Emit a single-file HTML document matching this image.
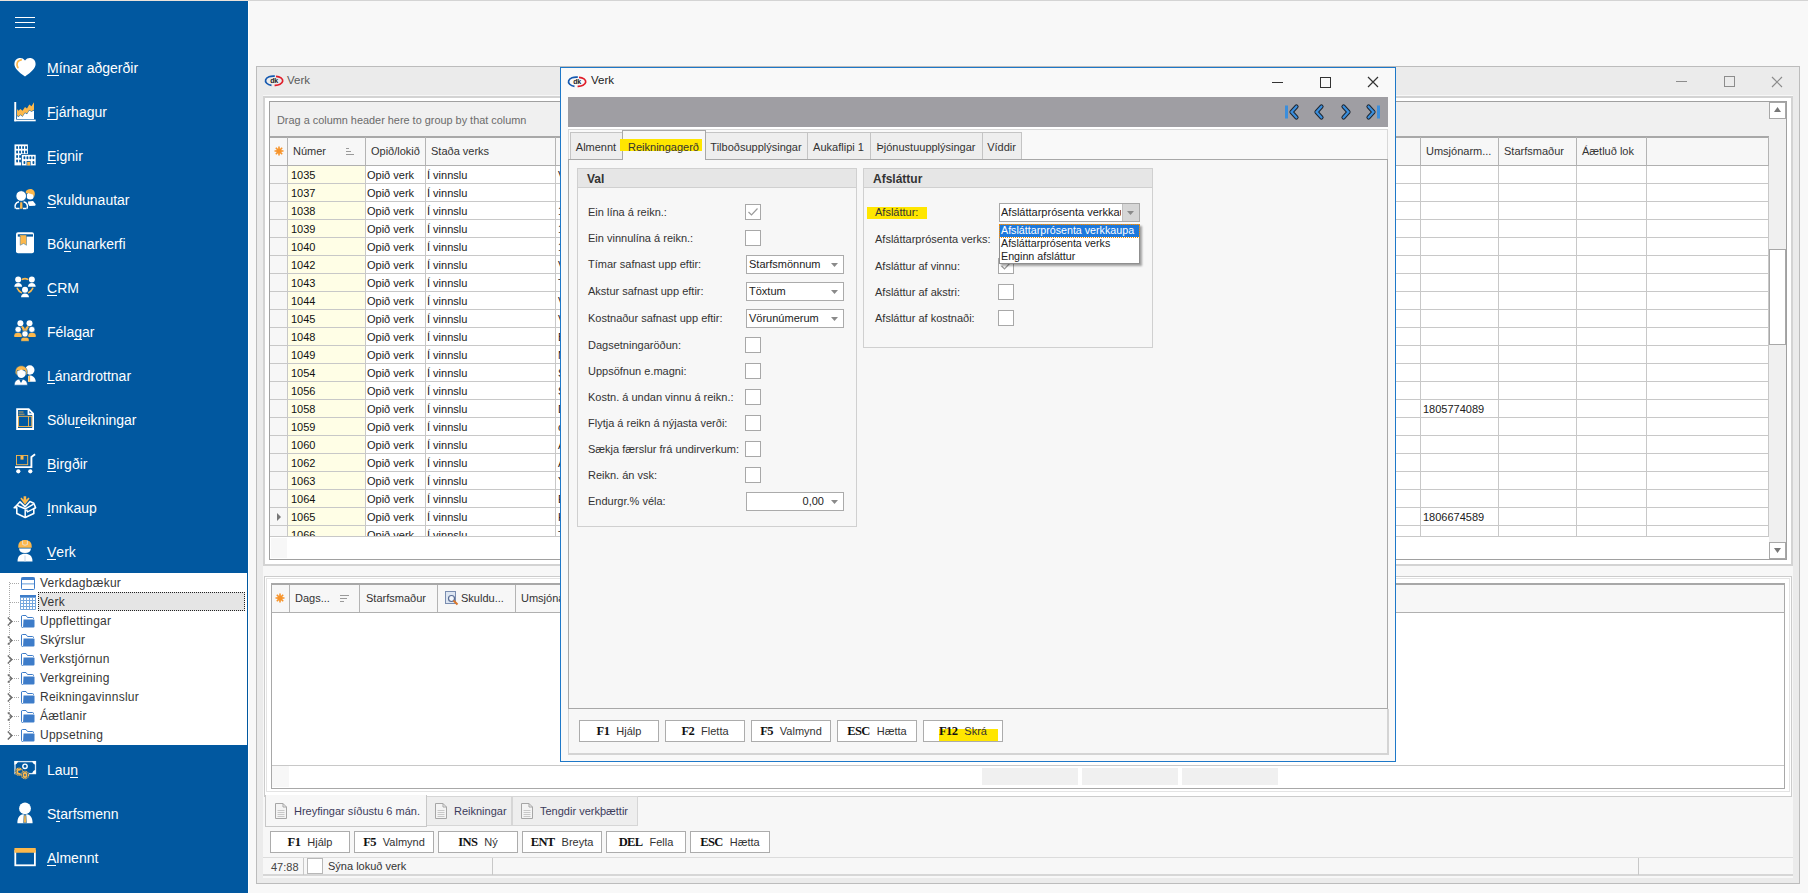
<!DOCTYPE html><html><head><meta charset="utf-8"><style>
*{box-sizing:border-box;margin:0;padding:0}
html,body{width:1808px;height:893px;overflow:hidden;background:#F8F8F8;font-family:"Liberation Sans",sans-serif;font-size:11px;color:#202020}
.a{position:absolute}
.t{position:absolute;white-space:nowrap;line-height:13px;height:13px}
.nav{position:absolute;left:47px;color:#fff;font-size:14px;white-space:nowrap;line-height:16px}
.nav u{text-decoration:none;position:relative}.nav u::after{content:'';position:absolute;left:0;right:0;top:15px;height:1px;background:#fff}
.tree{position:absolute;left:40px;font-size:12px;color:#363636;white-space:nowrap;line-height:14px;letter-spacing:0.25px}
.btn{position:absolute;height:22px;width:80px;border:1px solid #ACACAC;background:#fff;font-size:11px;line-height:20px;text-align:center;white-space:nowrap;color:#333}
.btn b{font-family:"Liberation Serif",serif;font-weight:bold;color:#111;margin-right:7px;font-size:12.5px;letter-spacing:-0.6px}
svg{position:absolute;overflow:visible}
</style></head><body>
<div class="a" style="left:0px;top:0px;width:248px;height:1px;background:#EBE2DA"></div>
<div class="a" style="left:248px;top:0px;width:1560px;height:1px;background:#D4D4D4"></div>
<div class="a" style="left:248px;top:1px;width:1px;height:892px;background:#fff"></div>
<div class="a" style="left:0px;top:1px;width:248px;height:892px;background:#0158A0"></div>
<div class="a" style="left:15px;top:17px;width:20px;height:1px;background:#fff"></div>
<div class="a" style="left:15px;top:22px;width:20px;height:1px;background:#fff"></div>
<div class="a" style="left:15px;top:27px;width:20px;height:1px;background:#fff"></div>
<div class="nav" style="top:60px"><u>M</u>ínar aðgerðir</div>
<div class="nav" style="top:104px"><u>F</u>járhagur</div>
<div class="nav" style="top:148px"><u>E</u>ignir</div>
<div class="nav" style="top:192px"><u>S</u>kuldunautar</div>
<div class="nav" style="top:236px">Bó<u>k</u>unarkerfi</div>
<div class="nav" style="top:280px"><u>C</u>RM</div>
<div class="nav" style="top:324px">Féla<u>g</u>ar</div>
<div class="nav" style="top:368px"><u>L</u>ánardrottnar</div>
<div class="nav" style="top:412px">Sölu<u>r</u>eikningar</div>
<div class="nav" style="top:456px"><u>B</u>irgðir</div>
<div class="nav" style="top:500px"><u>I</u>nnkaup</div>
<div class="nav" style="top:544px"><u>V</u>erk</div>
<div class="nav" style="top:762px">Lau<u>n</u></div>
<div class="nav" style="top:806px">S<u>t</u>arfsmenn</div>
<div class="nav" style="top:850px"><u>A</u>lmennt</div>
<svg style="left:10px;top:52px" width="32" height="28" viewBox="0 0 32 28"><path d="M15 8.6C13.6 6.4 11.3 5.8 9.2 6.1C6.2 6.6 4.4 9.2 4.4 12C4.4 16.2 8.2 19.8 15 24.6C21.8 19.8 25.6 16.2 25.6 12C25.6 9.2 23.8 6.6 20.8 6.1C18.7 5.8 16.4 6.4 15 8.6Z" fill="#fff"/><path d="M11.2 7.9C8.6 8.3 7 10.4 7 12.6C7 13.7 7.3 14.7 7.9 15.5" fill="none" stroke="#FCB84C" stroke-width="1.7" stroke-linecap="round"/></svg>
<svg style="left:10px;top:98px" width="32" height="28" viewBox="0 0 32 28"><rect x="4.3" y="4" width="1.9" height="19.3" fill="#fff"/><rect x="4.3" y="21.6" width="21.4" height="1.7" fill="#fff"/><path d="M7 18L8.5 19L10.5 17L12.5 18.8L15 15L17 16.2L19.2 12.6L21.5 13.8L24 12.5V21H7Z" fill="#fff"/><path d="M7 11L8.3 12.8L10.5 11L12.5 12.8L15 9L17 10.4L19.3 6.4L21.5 8.2L23.8 4.6L24 4.6V11.8L21.5 13.2L19.2 12L17 15.6L15 14.4L12.5 18.2L10.5 16.4L8.5 18.4L7 17.3Z" fill="#FCB84C"/></svg>
<svg style="left:10px;top:140px" width="32" height="28" viewBox="0 0 32 28"><rect x="4.5" y="4.4" width="13.4" height="21" fill="#fff"/><rect x="6.2" y="6" width="1.8" height="3" rx="0.8" fill="#0158A0"/><rect x="6.2" y="10.5" width="1.8" height="3" rx="0.8" fill="#0158A0"/><rect x="6.2" y="15" width="1.8" height="3" rx="0.8" fill="#0158A0"/><rect x="6.2" y="19.5" width="1.8" height="3" rx="0.8" fill="#0158A0"/><rect x="9.2" y="6" width="1.8" height="3" rx="0.8" fill="#0158A0"/><rect x="9.2" y="10.5" width="1.8" height="3" rx="0.8" fill="#0158A0"/><rect x="9.2" y="15" width="1.8" height="3" rx="0.8" fill="#0158A0"/><rect x="9.2" y="19.5" width="1.8" height="3" rx="0.8" fill="#0158A0"/><rect x="12.2" y="6" width="1.8" height="3" rx="0.8" fill="#0158A0"/><rect x="12.2" y="10.5" width="1.8" height="3" rx="0.8" fill="#0158A0"/><rect x="12.2" y="15" width="1.8" height="3" rx="0.8" fill="#0158A0"/><rect x="12.2" y="19.5" width="1.8" height="3" rx="0.8" fill="#0158A0"/><rect x="15.2" y="6" width="1.8" height="3" rx="0.8" fill="#0158A0"/><rect x="15.2" y="10.5" width="1.8" height="3" rx="0.8" fill="#0158A0"/><rect x="15.2" y="15" width="1.8" height="3" rx="0.8" fill="#0158A0"/><rect x="15.2" y="19.5" width="1.8" height="3" rx="0.8" fill="#0158A0"/><rect x="11.2" y="14" width="15.2" height="12" fill="#0158A0"/><rect x="12" y="14.8" width="13.7" height="10.6" fill="#fff"/><rect x="13.5" y="16.3" width="1.8" height="3" rx="0.8" fill="#0158A0"/><rect x="16.5" y="16.3" width="1.8" height="3" rx="0.8" fill="#0158A0"/><rect x="19.5" y="16.3" width="1.8" height="3" rx="0.8" fill="#0158A0"/><rect x="22.5" y="16.3" width="1.8" height="3" rx="0.8" fill="#0158A0"/><rect x="13.5" y="21" width="1.8" height="3" rx="0.8" fill="#0158A0"/><rect x="22.5" y="21" width="1.8" height="3" rx="0.8" fill="#0158A0"/><rect x="16.6" y="21" width="4" height="4.4" fill="#0158A0"/><rect x="17.2" y="21.8" width="2.8" height="3.6" fill="#FCB84C"/></svg>
<svg style="left:10px;top:184px" width="32" height="28" viewBox="0 0 32 28"><path d="M5.5 24.6C4.2 21.5 5.5 18.6 9 17.8M13.5 17.8C17 18.6 18.3 21.5 17 24.6" fill="none" stroke="#fff" stroke-width="1.5"/><path d="M6 24.5H9.5M13 24.5H16.5" stroke="#fff" stroke-width="1.5"/><path d="M10.2 18.2H12.3L12.6 24.8H10Z" fill="#FCB84C"/><path d="M18 17.5L23 17L25.7 20.3L25.2 21.8L19.4 22L18.2 20Z" fill="#fff"/><circle cx="20.2" cy="12" r="3.6" fill="#fff"/><path d="M15.6 8C16.5 5.8 18.3 5 20.3 5C23.5 5 25.2 7.5 24.8 10.5L24 13.2L23 10.6C21.5 10.3 19.2 9.6 18.2 9.1L16.5 9.7Z" fill="#FCB84C"/><circle cx="11.2" cy="12" r="5.3" fill="#fff" stroke="#0158A0" stroke-width="0.8"/></svg>
<svg style="left:10px;top:228px" width="32" height="28" viewBox="0 0 32 28"><rect x="6" y="4.2" width="18" height="21" rx="2" fill="#fff"/><path d="M7.8 6.3H23V8.6H7.8Z" fill="#0158A0"/><path d="M9.2 7H16.5V17.3L13.6 15.5L10.2 17.3V8.3Z" fill="#FCB84C" stroke="#0158A0" stroke-width="0.4"/></svg>
<svg style="left:10px;top:272px" width="32" height="28" viewBox="0 0 32 28"><circle cx="8.2" cy="7.4" r="3" fill="#fff"/><path d="M4.3 14.8C4.3 12.2 6 10.9 8.2 10.9C10.4 10.9 12.1 12.2 12.1 14.8Z" fill="#fff"/><circle cx="21.8" cy="7.4" r="3" fill="#fff"/><path d="M17.9 14.8C17.9 12.2 19.6 10.9 21.8 10.9C24 10.9 25.7 12.2 25.7 14.8Z" fill="#fff"/><circle cx="15" cy="17.8" r="3" fill="#fff"/><path d="M11 25.2C11 22.7 12.7 21.4 15 21.4C17.3 21.4 19 22.7 19 25.2Z" fill="#fff"/><path d="M12.4 7.3C14.2 6.3 15.8 6.3 17.6 7.3M7.3 16.3C8.3 18.4 9.7 19.8 11.4 20.6M22.7 16.3C21.7 18.4 20.3 19.8 18.6 20.6" fill="none" stroke="#FCB84C" stroke-width="1.6" stroke-linecap="round"/></svg>
<svg style="left:10px;top:316px" width="32" height="28" viewBox="0 0 32 28"><circle cx="10.4" cy="7.3" r="3" fill="#fff"/><circle cx="19.5" cy="7.3" r="3" fill="#fff"/><path d="M11.4 10.8C13.2 11 14 12.3 13.9 14.8L12.6 14.4C12.4 12.8 11.9 11.8 11.2 11.3ZM18.6 10.8C16.8 11 16 12.3 16.1 14.8L17.4 14.4C17.6 12.8 18.1 11.8 18.8 11.3Z" fill="#FCB84C"/><path d="M11.6 10.5Q14.4 11.2 14.2 15" fill="none" stroke="#FCB84C" stroke-width="1.6"/><path d="M18.4 10.5Q15.6 11.2 15.8 15" fill="none" stroke="#FCB84C" stroke-width="1.6"/><circle cx="8.1" cy="13.4" r="3" fill="#fff" stroke="#0158A0" stroke-width="0.5"/><circle cx="21.8" cy="13.4" r="3" fill="#fff" stroke="#0158A0" stroke-width="0.5"/><path d="M4.3 20.9V19.2Q4.3 16.9 6.6 16.9H9.4Q11.7 16.9 11.7 19.2V20.9Z" fill="#FCB84C"/><path d="M18.3 20.9V19.2Q18.3 16.9 20.6 16.9H23.4Q25.7 16.9 25.7 19.2V20.9Z" fill="#FCB84C"/><circle cx="15" cy="17.9" r="3.1" fill="#fff" stroke="#0158A0" stroke-width="0.6"/><path d="M11 25.3V23.6Q11 21.4 13.3 21.4H16.7Q19 21.4 19 23.6V25.3Z" fill="#FCB84C" stroke="#0158A0" stroke-width="0.4"/></svg>
<svg style="left:10px;top:360px" width="32" height="28" viewBox="0 0 32 28"><circle cx="19.8" cy="10" r="4.7" fill="#fff"/><path d="M18 16C20 14.8 24.5 15.3 25.7 20.8V21.8H18Z" fill="#fff"/><path d="M18.4 15.8H20.1V21.8H18.4Z" fill="#FCB84C"/><path d="M4.3 25.2C4.3 21.5 6.5 19 10.5 19C15 19 17.5 21.5 17.5 25.2Z" fill="#fff" stroke="#0158A0" stroke-width="0.6"/><path d="M9 19.3L11 23L13 19.3" fill="#0158A0"/><path d="M5.2 12.6C5.2 8.5 7.8 5.8 11.2 5.8C14.8 5.8 17.4 8.4 17.4 12.3C17.4 13.8 16.8 15 16 15.6V11.8L14 10L10.3 11L7 10.7V15.3C6.2 14.8 5.2 13.8 5.2 12.6Z" fill="#FCB84C" stroke="#0158A0" stroke-width="0.5"/><path d="M7.2 11.2L10 10.3L11 9.5L14 10.8L15.7 12V14.5C15 16.8 13.3 18 11.3 18C9.2 18 7.5 16.5 7.2 14.3Z" fill="#fff"/></svg>
<svg style="left:10px;top:404px" width="32" height="28" viewBox="0 0 32 28"><path d="M7.1 5.1H18.7L23.1 9.5V25H7.1Z" fill="none" stroke="#fff" stroke-width="1.8"/><path d="M18.5 5V10.2H23" fill="none" stroke="#fff" stroke-width="1.8"/><rect x="8.5" y="12.3" width="13.3" height="10.2" fill="none" stroke="#FCB84C" stroke-width="0.9"/><path d="M18.5 12.3V22.5" stroke="#FCB84C" stroke-width="0.9"/><path d="M8.5 8H13.5M8.5 10.2H14.5" stroke="#FCB84C" stroke-width="0.8"/></svg>
<svg style="left:10px;top:448px" width="32" height="28" viewBox="0 0 32 28"><path d="M25.1 6.3L21.4 9V19.1H5" fill="none" stroke="#fff" stroke-width="1.9"/><circle cx="8.3" cy="23.3" r="2.1" fill="#fff"/><circle cx="20.3" cy="23.3" r="2.1" fill="#fff"/><rect x="6.5" y="7.5" width="11.2" height="9.2" fill="none" stroke="#FCB84C" stroke-width="0.9"/><rect x="10.5" y="8" width="3" height="3.6" fill="#FCB84C"/></svg>
<svg style="left:10px;top:492px" width="32" height="28" viewBox="0 0 32 28"><path d="M6.6 13.5L4.2 15.8L6.8 15.5V21.5L15.2 25.5L23.8 21.5V16.7L25.6 15.7L23.8 11.2L20 9.5L15.2 14.8L10 9.8Z" fill="none" stroke="#fff" stroke-width="1.6" stroke-linejoin="round"/><path d="M6.8 13.2L15.2 16.8L23.6 12.2M15.2 16.8V25.3M16.5 17.6L17.5 19.8L24.8 16.2" fill="none" stroke="#fff" stroke-width="1.5"/><path d="M13.6 4.2H16.2V7.8L18.5 5.5L19.6 6.4L15 12.8L10.4 6.4L11.4 5.5L13.6 7.8Z" fill="#FCB84C"/></svg>
<svg style="left:10px;top:536px" width="32" height="28" viewBox="0 0 32 28"><path d="M8.3 10.2C8.3 6.2 11 4 15 4C19 4 21.7 6.2 21.7 10.2V11.8H8.3Z" fill="#FCB84C"/><path d="M12.6 4.5V8.5Q15 10 17.4 8.5V4.5" fill="none" stroke="#E8E8E8" stroke-width="0.8"/><path d="M9 12.5H21Q20.5 17 15 17Q9.5 17 9 12.5Z" fill="#fff"/><path d="M7.5 25.5C7.5 20 10.5 17.8 15 17.8C19.5 17.8 22.5 20 22.5 25.5Z" fill="#fff"/><path d="M15 19.5V25.5" stroke="#C9D8E8" stroke-width="1"/></svg>
<svg style="left:10px;top:754px" width="32" height="28" viewBox="0 0 32 28"><rect x="5" y="7.6" width="20.5" height="12" fill="none" stroke="#DCE8F3" stroke-width="1.3"/><path d="M4.4 7H8.2Q7.2 10.5 4.4 10.8ZM25.7 7H22Q23 10.5 25.7 10.8ZM25.7 19.7H22Q23 16.3 25.7 16ZM4.4 14V19.7" fill="#fff"/><circle cx="15" cy="12.3" r="2.2" fill="none" stroke="#fff" stroke-width="1.4"/><circle cx="9" cy="17.7" r="4.2" fill="#0158A0"/><circle cx="9" cy="17.7" r="3.6" fill="none" stroke="#FCB84C" stroke-width="1.2" stroke-dasharray="1.1 0.5"/><path d="M10.6 16Q9 14.8 7.6 16.2Q6.8 17.7 7.6 19.2Q9 20.5 10.6 19.4" fill="none" stroke="#FCB84C" stroke-width="1.8"/><circle cx="15" cy="21" r="4.2" fill="#0158A0"/><circle cx="15" cy="21" r="3.6" fill="none" stroke="#FCB84C" stroke-width="1.2" stroke-dasharray="1.1 0.5"/><ellipse cx="15" cy="21" rx="1.5" ry="2.1" fill="none" stroke="#FCB84C" stroke-width="1.7"/></svg>
<svg style="left:10px;top:798px" width="32" height="28" viewBox="0 0 32 28"><circle cx="15" cy="10.4" r="5.9" fill="#fff"/><path d="M7.4 25.2C7.3 19.8 9.8 16.4 13.2 16.2L15 17L16.8 16.2C20.2 16.4 22.7 19.8 22.6 25.2Z" fill="#fff"/><path d="M14 17.2H16L16.5 24.8H13.5Z" fill="#FCB84C" stroke="#0158A0" stroke-width="0.5"/></svg>
<svg style="left:10px;top:842px" width="32" height="28" viewBox="0 0 32 28"><rect x="5.3" y="9" width="19.6" height="14.3" fill="none" stroke="#fff" stroke-width="1.8"/><rect x="4.4" y="6" width="21.4" height="4.8" rx="0.6" fill="#FCB84C"/></svg>
<div class="a" style="left:0px;top:573px;width:247px;height:172px;background:#fff"></div>
<div class="tree" style="top:576px">Verkdagbækur</div>
<div class="a" style="left:10px;top:583px;width:9px;height:1px;border-top:1px dotted #A8A8A8"></div>
<svg style="left:21px;top:577px" width="14" height="13"><rect x="0.5" y="0.5" width="13" height="12" rx="1" fill="#fff" stroke="#3D7CC9"/><rect x="0.5" y="0.5" width="13" height="2.5" fill="#3D7CC9"/><rect x="1" y="6" width="12" height="1.6" fill="#9DC0E6"/></svg>
<div class="a" style="left:38px;top:592px;width:207px;height:19px;background:#E5E5E5;border:1px dotted #222"></div>
<div class="tree" style="top:595px">Verk</div>
<div class="a" style="left:10px;top:602px;width:9px;height:1px;border-top:1px dotted #A8A8A8"></div>
<svg style="left:20px;top:595px" width="16" height="15"><rect x="0" y="0" width="16" height="15" rx="1" fill="#76A7DE"/><rect x="0" y="0" width="16" height="2" fill="#3D7CC9"/><rect x="1" y="3" width="2" height="2" fill="#fff"/><rect x="1" y="6" width="2" height="2" fill="#fff"/><rect x="1" y="9" width="2" height="2" fill="#fff"/><rect x="1" y="12" width="2" height="2" fill="#fff"/><rect x="4" y="3" width="2" height="2" fill="#fff"/><rect x="4" y="6" width="2" height="2" fill="#fff"/><rect x="4" y="9" width="2" height="2" fill="#fff"/><rect x="4" y="12" width="2" height="2" fill="#fff"/><rect x="7" y="3" width="2" height="2" fill="#fff"/><rect x="7" y="6" width="2" height="2" fill="#fff"/><rect x="7" y="9" width="2" height="2" fill="#fff"/><rect x="7" y="12" width="2" height="2" fill="#fff"/><rect x="10" y="3" width="2" height="2" fill="#fff"/><rect x="10" y="6" width="2" height="2" fill="#fff"/><rect x="10" y="9" width="2" height="2" fill="#fff"/><rect x="10" y="12" width="2" height="2" fill="#fff"/><rect x="13" y="3" width="2" height="2" fill="#fff"/><rect x="13" y="6" width="2" height="2" fill="#fff"/><rect x="13" y="9" width="2" height="2" fill="#fff"/><rect x="13" y="12" width="2" height="2" fill="#fff"/></svg>
<div class="tree" style="top:614px">Uppflettingar</div>
<div class="a" style="left:10px;top:621px;width:9px;height:1px;border-top:1px dotted #A8A8A8"></div>
<svg style="left:21px;top:615px" width="14" height="13"><path d="M0.5 1.5Q0.5 0.5 1.5 0.5H5L6.5 2.5H11.5Q12.5 2.5 12.5 3.5V4" fill="none" stroke="#3D7CC9"/><path d="M0.5 1V11.5Q0.5 12.5 1.5 12.5H2" fill="none" stroke="#3D7CC9"/><path d="M2.5 4.5H13Q13.5 4.5 13.5 5.5V11.5Q13.5 12.5 12.5 12.5H2Z" fill="#3D7CC9"/></svg>
<svg style="left:7px;top:617px" width="6" height="9"><path d="M0.8 0.6L4.8 4.5L0.8 8.4" fill="none" stroke="#6A6A6A" stroke-width="1.4"/></svg>
<div class="tree" style="top:633px">Skýrslur</div>
<div class="a" style="left:10px;top:640px;width:9px;height:1px;border-top:1px dotted #A8A8A8"></div>
<svg style="left:21px;top:634px" width="14" height="13"><path d="M0.5 1.5Q0.5 0.5 1.5 0.5H5L6.5 2.5H11.5Q12.5 2.5 12.5 3.5V4" fill="none" stroke="#3D7CC9"/><path d="M0.5 1V11.5Q0.5 12.5 1.5 12.5H2" fill="none" stroke="#3D7CC9"/><path d="M2.5 4.5H13Q13.5 4.5 13.5 5.5V11.5Q13.5 12.5 12.5 12.5H2Z" fill="#3D7CC9"/></svg>
<svg style="left:7px;top:636px" width="6" height="9"><path d="M0.8 0.6L4.8 4.5L0.8 8.4" fill="none" stroke="#6A6A6A" stroke-width="1.4"/></svg>
<div class="tree" style="top:652px">Verkstjórnun</div>
<div class="a" style="left:10px;top:659px;width:9px;height:1px;border-top:1px dotted #A8A8A8"></div>
<svg style="left:21px;top:653px" width="14" height="13"><path d="M0.5 1.5Q0.5 0.5 1.5 0.5H5L6.5 2.5H11.5Q12.5 2.5 12.5 3.5V4" fill="none" stroke="#3D7CC9"/><path d="M0.5 1V11.5Q0.5 12.5 1.5 12.5H2" fill="none" stroke="#3D7CC9"/><path d="M2.5 4.5H13Q13.5 4.5 13.5 5.5V11.5Q13.5 12.5 12.5 12.5H2Z" fill="#3D7CC9"/></svg>
<svg style="left:7px;top:655px" width="6" height="9"><path d="M0.8 0.6L4.8 4.5L0.8 8.4" fill="none" stroke="#6A6A6A" stroke-width="1.4"/></svg>
<div class="tree" style="top:671px">Verkgreining</div>
<div class="a" style="left:10px;top:678px;width:9px;height:1px;border-top:1px dotted #A8A8A8"></div>
<svg style="left:21px;top:672px" width="14" height="13"><path d="M0.5 1.5Q0.5 0.5 1.5 0.5H5L6.5 2.5H11.5Q12.5 2.5 12.5 3.5V4" fill="none" stroke="#3D7CC9"/><path d="M0.5 1V11.5Q0.5 12.5 1.5 12.5H2" fill="none" stroke="#3D7CC9"/><path d="M2.5 4.5H13Q13.5 4.5 13.5 5.5V11.5Q13.5 12.5 12.5 12.5H2Z" fill="#3D7CC9"/></svg>
<svg style="left:7px;top:674px" width="6" height="9"><path d="M0.8 0.6L4.8 4.5L0.8 8.4" fill="none" stroke="#6A6A6A" stroke-width="1.4"/></svg>
<div class="tree" style="top:690px">Reikningavinnslur</div>
<div class="a" style="left:10px;top:697px;width:9px;height:1px;border-top:1px dotted #A8A8A8"></div>
<svg style="left:21px;top:691px" width="14" height="13"><path d="M0.5 1.5Q0.5 0.5 1.5 0.5H5L6.5 2.5H11.5Q12.5 2.5 12.5 3.5V4" fill="none" stroke="#3D7CC9"/><path d="M0.5 1V11.5Q0.5 12.5 1.5 12.5H2" fill="none" stroke="#3D7CC9"/><path d="M2.5 4.5H13Q13.5 4.5 13.5 5.5V11.5Q13.5 12.5 12.5 12.5H2Z" fill="#3D7CC9"/></svg>
<svg style="left:7px;top:693px" width="6" height="9"><path d="M0.8 0.6L4.8 4.5L0.8 8.4" fill="none" stroke="#6A6A6A" stroke-width="1.4"/></svg>
<div class="tree" style="top:709px">Áætlanir</div>
<div class="a" style="left:10px;top:716px;width:9px;height:1px;border-top:1px dotted #A8A8A8"></div>
<svg style="left:21px;top:710px" width="14" height="13"><path d="M0.5 1.5Q0.5 0.5 1.5 0.5H5L6.5 2.5H11.5Q12.5 2.5 12.5 3.5V4" fill="none" stroke="#3D7CC9"/><path d="M0.5 1V11.5Q0.5 12.5 1.5 12.5H2" fill="none" stroke="#3D7CC9"/><path d="M2.5 4.5H13Q13.5 4.5 13.5 5.5V11.5Q13.5 12.5 12.5 12.5H2Z" fill="#3D7CC9"/></svg>
<svg style="left:7px;top:712px" width="6" height="9"><path d="M0.8 0.6L4.8 4.5L0.8 8.4" fill="none" stroke="#6A6A6A" stroke-width="1.4"/></svg>
<div class="tree" style="top:728px">Uppsetning</div>
<div class="a" style="left:10px;top:735px;width:9px;height:1px;border-top:1px dotted #A8A8A8"></div>
<svg style="left:21px;top:729px" width="14" height="13"><path d="M0.5 1.5Q0.5 0.5 1.5 0.5H5L6.5 2.5H11.5Q12.5 2.5 12.5 3.5V4" fill="none" stroke="#3D7CC9"/><path d="M0.5 1V11.5Q0.5 12.5 1.5 12.5H2" fill="none" stroke="#3D7CC9"/><path d="M2.5 4.5H13Q13.5 4.5 13.5 5.5V11.5Q13.5 12.5 12.5 12.5H2Z" fill="#3D7CC9"/></svg>
<svg style="left:7px;top:731px" width="6" height="9"><path d="M0.8 0.6L4.8 4.5L0.8 8.4" fill="none" stroke="#6A6A6A" stroke-width="1.4"/></svg>
<div class="a" style="left:9px;top:582px;width:1px;height:153px;border-left:1px dotted #A8A8A8"></div>
<div class="a" style="left:256px;top:66px;width:1544px;height:818px;background:#EBEBEB;border:1px solid #BCBCBC"></div>
<div class="t" style="left:287px;top:74px;font-size:11.5px;color:#5A5A5A;line-height:13px">Verk</div>
<div class="a" style="left:1676px;top:81px;width:11px;height:1px;background:#8C8C8C"></div>
<div class="a" style="left:1724px;top:76px;width:11px;height:11px;border:1px solid #8C8C8C"></div>
<svg style="left:1771px;top:76px" width="12" height="12"><path d="M1 1L11 11M11 1L1 11" stroke="#8C8C8C" stroke-width="1.2"/></svg>
<div class="a" style="left:263px;top:95px;width:1530px;height:783px;background:#F7F7F7"></div>
<div class="a" style="left:263px;top:96px;width:1530px;height:470px;background:#fff;border:2px solid #D3D3D3"></div>
<div class="a" style="left:269px;top:101px;width:1518px;height:459px;background:#fff;border:1px solid #A0A0A0"></div>
<div class="a" style="left:270px;top:102px;width:1499px;height:34px;background:#F0F0F0"></div>
<div class="t" style="left:277px;top:114px;color:#6B6B6B;font-size:10.9px">Drag a column header here to group by that column</div>
<div class="a" style="left:270px;top:136px;width:1499px;height:30px;background:#F7F7F7;border-top:2px solid #A8A8A8;border-bottom:1px solid #B0B0B0"></div>
<div class="a" style="left:287px;top:137px;width:1px;height:28px;background:#B4B4B4"></div>
<div class="a" style="left:365px;top:137px;width:1px;height:28px;background:#B4B4B4"></div>
<div class="a" style="left:425px;top:137px;width:1px;height:28px;background:#B4B4B4"></div>
<div class="a" style="left:555px;top:137px;width:1px;height:28px;background:#B4B4B4"></div>
<div class="a" style="left:1420px;top:137px;width:1px;height:28px;background:#B4B4B4"></div>
<div class="a" style="left:1498px;top:137px;width:1px;height:28px;background:#B4B4B4"></div>
<div class="a" style="left:1576px;top:137px;width:1px;height:28px;background:#B4B4B4"></div>
<div class="a" style="left:1646px;top:137px;width:1px;height:28px;background:#B4B4B4"></div>
<div class="a" style="left:1768px;top:137px;width:1px;height:28px;background:#B4B4B4"></div>
<svg style="left:274px;top:146px" width="10" height="10"><g stroke="#F7942B" stroke-width="1.6"><path d="M5 0.5V9.5M0.5 5H9.5M1.8 1.8L8.2 8.2M8.2 1.8L1.8 8.2"/></g><circle cx="5" cy="5" r="2.6" fill="#F7942B"/></svg>
<div class="t" style="left:293px;top:145px;color:#333">Númer</div>
<svg style="left:346px;top:146px" width="10" height="10"><g fill="#9A9A9A"><rect x="0" y="2" width="3" height="1"/><rect x="0" y="5" width="5" height="1"/><rect x="0" y="8" width="8" height="1"/></g></svg>
<div class="t" style="left:371px;top:145px;color:#333">Opið/lokið</div>
<div class="t" style="left:431px;top:145px;color:#333">Staða verks</div>
<div class="t" style="left:1426px;top:145px;color:#333">Umsjónarm...</div>
<div class="t" style="left:1504px;top:145px;color:#333">Starfsmaður</div>
<div class="t" style="left:1582px;top:145px;color:#333">Áætluð lok</div>
<div class="a" style="left:270px;top:166px;width:1499px;height:370px;overflow:hidden">
<div class="a" style="left:0;top:0px;width:17px;height:18px;background:#F7F7F7"></div>
<div class="a" style="left:18px;top:0px;width:77px;height:18px;background:#FFFEE6"></div>
<div class="a" style="left:0;top:17px;width:1499px;height:1px;background:#C8C8C8"></div>
<div class="t" style="left:21px;top:3px;color:#111">1035</div>
<div class="t" style="left:97px;top:3px">Opið verk</div>
<div class="t" style="left:157px;top:3px">Í vinnslu</div>
<div class="t" style="left:288px;top:3px">V</div>
<div class="a" style="left:0;top:18px;width:17px;height:18px;background:#F7F7F7"></div>
<div class="a" style="left:18px;top:18px;width:77px;height:18px;background:#FFFEE6"></div>
<div class="a" style="left:0;top:35px;width:1499px;height:1px;background:#C8C8C8"></div>
<div class="t" style="left:21px;top:21px;color:#111">1037</div>
<div class="t" style="left:97px;top:21px">Opið verk</div>
<div class="t" style="left:157px;top:21px">Í vinnslu</div>
<div class="a" style="left:0;top:36px;width:17px;height:18px;background:#F7F7F7"></div>
<div class="a" style="left:18px;top:36px;width:77px;height:18px;background:#FFFEE6"></div>
<div class="a" style="left:0;top:53px;width:1499px;height:1px;background:#C8C8C8"></div>
<div class="t" style="left:21px;top:39px;color:#111">1038</div>
<div class="t" style="left:97px;top:39px">Opið verk</div>
<div class="t" style="left:157px;top:39px">Í vinnslu</div>
<div class="t" style="left:288px;top:39px">1</div>
<div class="a" style="left:0;top:54px;width:17px;height:18px;background:#F7F7F7"></div>
<div class="a" style="left:18px;top:54px;width:77px;height:18px;background:#FFFEE6"></div>
<div class="a" style="left:0;top:71px;width:1499px;height:1px;background:#C8C8C8"></div>
<div class="t" style="left:21px;top:57px;color:#111">1039</div>
<div class="t" style="left:97px;top:57px">Opið verk</div>
<div class="t" style="left:157px;top:57px">Í vinnslu</div>
<div class="t" style="left:288px;top:57px">1</div>
<div class="a" style="left:0;top:72px;width:17px;height:18px;background:#F7F7F7"></div>
<div class="a" style="left:18px;top:72px;width:77px;height:18px;background:#FFFEE6"></div>
<div class="a" style="left:0;top:89px;width:1499px;height:1px;background:#C8C8C8"></div>
<div class="t" style="left:21px;top:75px;color:#111">1040</div>
<div class="t" style="left:97px;top:75px">Opið verk</div>
<div class="t" style="left:157px;top:75px">Í vinnslu</div>
<div class="t" style="left:288px;top:75px">1</div>
<div class="a" style="left:0;top:90px;width:17px;height:18px;background:#F7F7F7"></div>
<div class="a" style="left:18px;top:90px;width:77px;height:18px;background:#FFFEE6"></div>
<div class="a" style="left:0;top:107px;width:1499px;height:1px;background:#C8C8C8"></div>
<div class="t" style="left:21px;top:93px;color:#111">1042</div>
<div class="t" style="left:97px;top:93px">Opið verk</div>
<div class="t" style="left:157px;top:93px">Í vinnslu</div>
<div class="t" style="left:288px;top:93px">V</div>
<div class="a" style="left:0;top:108px;width:17px;height:18px;background:#F7F7F7"></div>
<div class="a" style="left:18px;top:108px;width:77px;height:18px;background:#FFFEE6"></div>
<div class="a" style="left:0;top:125px;width:1499px;height:1px;background:#C8C8C8"></div>
<div class="t" style="left:21px;top:111px;color:#111">1043</div>
<div class="t" style="left:97px;top:111px">Opið verk</div>
<div class="t" style="left:157px;top:111px">Í vinnslu</div>
<div class="t" style="left:288px;top:111px">T</div>
<div class="a" style="left:0;top:126px;width:17px;height:18px;background:#F7F7F7"></div>
<div class="a" style="left:18px;top:126px;width:77px;height:18px;background:#FFFEE6"></div>
<div class="a" style="left:0;top:143px;width:1499px;height:1px;background:#C8C8C8"></div>
<div class="t" style="left:21px;top:129px;color:#111">1044</div>
<div class="t" style="left:97px;top:129px">Opið verk</div>
<div class="t" style="left:157px;top:129px">Í vinnslu</div>
<div class="t" style="left:288px;top:129px">V</div>
<div class="a" style="left:0;top:144px;width:17px;height:18px;background:#F7F7F7"></div>
<div class="a" style="left:18px;top:144px;width:77px;height:18px;background:#FFFEE6"></div>
<div class="a" style="left:0;top:161px;width:1499px;height:1px;background:#C8C8C8"></div>
<div class="t" style="left:21px;top:147px;color:#111">1045</div>
<div class="t" style="left:97px;top:147px">Opið verk</div>
<div class="t" style="left:157px;top:147px">Í vinnslu</div>
<div class="t" style="left:288px;top:147px">V</div>
<div class="a" style="left:0;top:162px;width:17px;height:18px;background:#F7F7F7"></div>
<div class="a" style="left:18px;top:162px;width:77px;height:18px;background:#FFFEE6"></div>
<div class="a" style="left:0;top:179px;width:1499px;height:1px;background:#C8C8C8"></div>
<div class="t" style="left:21px;top:165px;color:#111">1048</div>
<div class="t" style="left:97px;top:165px">Opið verk</div>
<div class="t" style="left:157px;top:165px">Í vinnslu</div>
<div class="t" style="left:288px;top:165px">B</div>
<div class="a" style="left:0;top:180px;width:17px;height:18px;background:#F7F7F7"></div>
<div class="a" style="left:18px;top:180px;width:77px;height:18px;background:#FFFEE6"></div>
<div class="a" style="left:0;top:197px;width:1499px;height:1px;background:#C8C8C8"></div>
<div class="t" style="left:21px;top:183px;color:#111">1049</div>
<div class="t" style="left:97px;top:183px">Opið verk</div>
<div class="t" style="left:157px;top:183px">Í vinnslu</div>
<div class="t" style="left:288px;top:183px">N</div>
<div class="a" style="left:0;top:198px;width:17px;height:18px;background:#F7F7F7"></div>
<div class="a" style="left:18px;top:198px;width:77px;height:18px;background:#FFFEE6"></div>
<div class="a" style="left:0;top:215px;width:1499px;height:1px;background:#C8C8C8"></div>
<div class="t" style="left:21px;top:201px;color:#111">1054</div>
<div class="t" style="left:97px;top:201px">Opið verk</div>
<div class="t" style="left:157px;top:201px">Í vinnslu</div>
<div class="t" style="left:288px;top:201px">S</div>
<div class="a" style="left:0;top:216px;width:17px;height:18px;background:#F7F7F7"></div>
<div class="a" style="left:18px;top:216px;width:77px;height:18px;background:#FFFEE6"></div>
<div class="a" style="left:0;top:233px;width:1499px;height:1px;background:#C8C8C8"></div>
<div class="t" style="left:21px;top:219px;color:#111">1056</div>
<div class="t" style="left:97px;top:219px">Opið verk</div>
<div class="t" style="left:157px;top:219px">Í vinnslu</div>
<div class="t" style="left:288px;top:219px">S</div>
<div class="a" style="left:0;top:234px;width:17px;height:18px;background:#F7F7F7"></div>
<div class="a" style="left:18px;top:234px;width:77px;height:18px;background:#FFFEE6"></div>
<div class="a" style="left:0;top:251px;width:1499px;height:1px;background:#C8C8C8"></div>
<div class="t" style="left:21px;top:237px;color:#111">1058</div>
<div class="t" style="left:97px;top:237px">Opið verk</div>
<div class="t" style="left:157px;top:237px">Í vinnslu</div>
<div class="t" style="left:288px;top:237px">D</div>
<div class="t" style="left:1153px;top:237px">1805774089</div>
<div class="a" style="left:0;top:252px;width:17px;height:18px;background:#F7F7F7"></div>
<div class="a" style="left:18px;top:252px;width:77px;height:18px;background:#FFFEE6"></div>
<div class="a" style="left:0;top:269px;width:1499px;height:1px;background:#C8C8C8"></div>
<div class="t" style="left:21px;top:255px;color:#111">1059</div>
<div class="t" style="left:97px;top:255px">Opið verk</div>
<div class="t" style="left:157px;top:255px">Í vinnslu</div>
<div class="t" style="left:288px;top:255px">c</div>
<div class="a" style="left:0;top:270px;width:17px;height:18px;background:#F7F7F7"></div>
<div class="a" style="left:18px;top:270px;width:77px;height:18px;background:#FFFEE6"></div>
<div class="a" style="left:0;top:287px;width:1499px;height:1px;background:#C8C8C8"></div>
<div class="t" style="left:21px;top:273px;color:#111">1060</div>
<div class="t" style="left:97px;top:273px">Opið verk</div>
<div class="t" style="left:157px;top:273px">Í vinnslu</div>
<div class="t" style="left:288px;top:273px">A</div>
<div class="a" style="left:0;top:288px;width:17px;height:18px;background:#F7F7F7"></div>
<div class="a" style="left:18px;top:288px;width:77px;height:18px;background:#FFFEE6"></div>
<div class="a" style="left:0;top:305px;width:1499px;height:1px;background:#C8C8C8"></div>
<div class="t" style="left:21px;top:291px;color:#111">1062</div>
<div class="t" style="left:97px;top:291px">Opið verk</div>
<div class="t" style="left:157px;top:291px">Í vinnslu</div>
<div class="t" style="left:288px;top:291px">A</div>
<div class="a" style="left:0;top:306px;width:17px;height:18px;background:#F7F7F7"></div>
<div class="a" style="left:18px;top:306px;width:77px;height:18px;background:#FFFEE6"></div>
<div class="a" style="left:0;top:323px;width:1499px;height:1px;background:#C8C8C8"></div>
<div class="t" style="left:21px;top:309px;color:#111">1063</div>
<div class="t" style="left:97px;top:309px">Opið verk</div>
<div class="t" style="left:157px;top:309px">Í vinnslu</div>
<div class="t" style="left:288px;top:309px">Y</div>
<div class="a" style="left:0;top:324px;width:17px;height:18px;background:#F7F7F7"></div>
<div class="a" style="left:18px;top:324px;width:77px;height:18px;background:#FFFEE6"></div>
<div class="a" style="left:0;top:341px;width:1499px;height:1px;background:#C8C8C8"></div>
<div class="t" style="left:21px;top:327px;color:#111">1064</div>
<div class="t" style="left:97px;top:327px">Opið verk</div>
<div class="t" style="left:157px;top:327px">Í vinnslu</div>
<div class="t" style="left:288px;top:327px">E</div>
<div class="a" style="left:0;top:342px;width:17px;height:18px;background:#F7F7F7"></div>
<div class="a" style="left:18px;top:342px;width:77px;height:18px;background:#FFFEE6"></div>
<div class="a" style="left:0;top:359px;width:1499px;height:1px;background:#C8C8C8"></div>
<div class="t" style="left:21px;top:345px;color:#111">1065</div>
<div class="t" style="left:97px;top:345px">Opið verk</div>
<div class="t" style="left:157px;top:345px">Í vinnslu</div>
<div class="t" style="left:288px;top:345px">H</div>
<div class="t" style="left:1153px;top:345px">1806674589</div>
<svg style="left:7px;top:347px" width="5" height="8"><path d="M0 0L4 4L0 8Z" fill="#777"/></svg>
<div class="a" style="left:0;top:360px;width:17px;height:18px;background:#F7F7F7"></div>
<div class="a" style="left:18px;top:360px;width:77px;height:18px;background:#FFFEE6"></div>
<div class="a" style="left:0;top:377px;width:1499px;height:1px;background:#C8C8C8"></div>
<div class="t" style="left:21px;top:363px;color:#111">1066</div>
<div class="t" style="left:97px;top:363px">Opið verk</div>
<div class="t" style="left:157px;top:363px">Í vinnslu</div>
<div class="t" style="left:288px;top:363px">T</div>
<div class="a" style="left:17px;top:0;width:1px;height:371px;background:#C8C8C8"></div>
<div class="a" style="left:95px;top:0;width:1px;height:371px;background:#C8C8C8"></div>
<div class="a" style="left:155px;top:0;width:1px;height:371px;background:#C8C8C8"></div>
<div class="a" style="left:285px;top:0;width:1px;height:371px;background:#C8C8C8"></div>
<div class="a" style="left:1150px;top:0;width:1px;height:371px;background:#C8C8C8"></div>
<div class="a" style="left:1228px;top:0;width:1px;height:371px;background:#C8C8C8"></div>
<div class="a" style="left:1306px;top:0;width:1px;height:371px;background:#C8C8C8"></div>
<div class="a" style="left:1376px;top:0;width:1px;height:371px;background:#C8C8C8"></div>
<div class="a" style="left:1498px;top:0;width:1px;height:371px;background:#C8C8C8"></div>
</div>
<div class="a" style="left:270px;top:536px;width:1499px;height:1px;background:#C8C8C8"></div>
<div class="a" style="left:269px;top:101px;width:1px;height:459px;background:#A0A0A0"></div>
<div class="a" style="left:271px;top:538px;width:16px;height:20px;background:#F7F7F7"></div>
<div class="a" style="left:1769px;top:102px;width:17px;height:457px;background:#F0F0F0"></div>
<div class="a" style="left:1769px;top:102px;width:17px;height:17px;background:#fff;border:1px solid #A8A8A8"></div>
<svg style="left:1774px;top:107px" width="7" height="5"><path d="M0 5L3.5 0L7 5Z" fill="#777"/></svg>
<div class="a" style="left:1769px;top:249px;width:17px;height:96px;background:#fff;border:1px solid #A8A8A8"></div>
<div class="a" style="left:1769px;top:542px;width:17px;height:17px;background:#fff;border:1px solid #A8A8A8"></div>
<svg style="left:1774px;top:548px" width="7" height="5"><path d="M0 0L3.5 5L7 0Z" fill="#777"/></svg>
<div class="a" style="left:263px;top:566px;width:1530px;height:10px;background:#F7F7F7"></div>
<div class="a" style="left:264px;top:576px;width:1528px;height:221px;background:#fff;border:1px solid #CCCCCC"></div>
<div class="a" style="left:266px;top:578px;width:1524px;height:214px;border:1px solid #E4E4E4"></div>
<div class="a" style="left:271px;top:583px;width:1514px;height:206px;background:#fff;border:1px solid #A8A8A8"></div>
<div class="a" style="left:271px;top:583px;width:1514px;height:30px;background:#F7F7F7;border:1px solid #A8A8A8;border-top:2px solid #A8A8A8;border-bottom:1px solid #B0B0B0"></div>
<div class="a" style="left:289px;top:585px;width:1px;height:27px;background:#B4B4B4"></div>
<div class="a" style="left:359px;top:585px;width:1px;height:27px;background:#B4B4B4"></div>
<div class="a" style="left:437px;top:585px;width:1px;height:27px;background:#B4B4B4"></div>
<div class="a" style="left:515px;top:585px;width:1px;height:27px;background:#B4B4B4"></div>
<svg style="left:275px;top:593px" width="10" height="10"><g stroke="#F7942B" stroke-width="1.6"><path d="M5 0.5V9.5M0.5 5H9.5M1.8 1.8L8.2 8.2M8.2 1.8L1.8 8.2"/></g><circle cx="5" cy="5" r="2.6" fill="#F7942B"/></svg>
<div class="t" style="left:295px;top:592px;color:#333">Dags...</div>
<svg style="left:340px;top:595px" width="10" height="8"><g fill="#9A9A9A"><rect x="0" y="0" width="9" height="1"/><rect x="0" y="3" width="7" height="1"/><rect x="0" y="6" width="4" height="1"/></g></svg>
<div class="t" style="left:366px;top:592px;color:#333">Starfsmaður</div>
<svg style="left:445px;top:591px" width="14" height="15"><rect x="0.5" y="0.5" width="10" height="12" fill="#DDE6F2" stroke="#7A8DB0"/><circle cx="6.5" cy="7.5" r="3" fill="#F4F8FC" stroke="#5A6E96" stroke-width="1.2"/><path d="M8.5 9.5L12.5 13.5" stroke="#D9772B" stroke-width="2"/></svg>
<div class="t" style="left:461px;top:592px;color:#333">Skuldu...</div>
<div class="t" style="left:521px;top:592px;color:#333">Umsjóna</div>
<div class="a" style="left:272px;top:765px;width:1512px;height:1px;background:#C8C8C8"></div>
<div class="a" style="left:272px;top:766px;width:17px;height:21px;background:#F7F7F7"></div>
<div class="a" style="left:982px;top:768px;width:96px;height:17px;background:#F0F0F0"></div>
<div class="a" style="left:1082px;top:768px;width:96px;height:17px;background:#F0F0F0"></div>
<div class="a" style="left:1182px;top:768px;width:96px;height:17px;background:#F0F0F0"></div>
<div class="a" style="left:263px;top:797px;width:1530px;height:60px;background:#F7F7F7"></div>
<div class="a" style="left:426px;top:796px;width:86px;height:30px;background:#EEEEEE;border:1px solid #D6D6D6"></div>
<div class="a" style="left:512px;top:796px;width:126px;height:30px;background:#EEEEEE;border:1px solid #D6D6D6"></div>
<div class="a" style="left:265px;top:795px;width:162px;height:32px;background:#F7F7F7;border:1px solid #C8C8C8;border-top:none"></div>
<svg style="left:275px;top:803px" width="12" height="16"><path d="M0.5 0.5H8L11.5 4V15.5H0.5Z" fill="#F4F4F4" stroke="#A6A6A6"/><path d="M8 0.5V4H11.5" fill="none" stroke="#A6A6A6"/><g stroke="#C8C8C8"><path d="M2.5 7.5H9.5M2.5 9.5H9.5M2.5 11.5H9.5M2.5 13.5H9.5"/></g></svg>
<div class="t" style="left:294px;top:805px;color:#3b3b5b">Hreyfingar síðustu 6 mán.</div>
<svg style="left:435px;top:803px" width="12" height="16"><path d="M0.5 0.5H8L11.5 4V15.5H0.5Z" fill="#F4F4F4" stroke="#A6A6A6"/><path d="M8 0.5V4H11.5" fill="none" stroke="#A6A6A6"/><g stroke="#C8C8C8"><path d="M2.5 7.5H9.5M2.5 9.5H9.5M2.5 11.5H9.5M2.5 13.5H9.5"/></g></svg>
<div class="t" style="left:454px;top:805px;color:#3b3b5b">Reikningar</div>
<svg style="left:521px;top:803px" width="12" height="16"><path d="M0.5 0.5H8L11.5 4V15.5H0.5Z" fill="#F4F4F4" stroke="#A6A6A6"/><path d="M8 0.5V4H11.5" fill="none" stroke="#A6A6A6"/><g stroke="#C8C8C8"><path d="M2.5 7.5H9.5M2.5 9.5H9.5M2.5 11.5H9.5M2.5 13.5H9.5"/></g></svg>
<div class="t" style="left:540px;top:805px;color:#3b3b5b">Tengdir verkþættir</div>
<div class="btn" style="left:270px;top:831px;width:80px;height:22px;background:#fff;line-height:20px"><b>F1</b>Hjálp</div>
<div class="btn" style="left:354px;top:831px;width:80px;height:22px;background:#fff;line-height:20px"><b>F5</b>Valmynd</div>
<div class="btn" style="left:438px;top:831px;width:80px;height:22px;background:#fff;line-height:20px"><b>INS</b>Ný</div>
<div class="btn" style="left:522px;top:831px;width:80px;height:22px;background:#fff;line-height:20px"><b>ENT</b>Breyta</div>
<div class="btn" style="left:606px;top:831px;width:80px;height:22px;background:#fff;line-height:20px"><b>DEL</b>Fella</div>
<div class="btn" style="left:690px;top:831px;width:80px;height:22px;background:#fff;line-height:20px"><b>ESC</b>Hætta</div>
<div class="a" style="left:263px;top:857px;width:1530px;height:19px;background:#F7F7F7;border-top:1px solid #DCDCDC;border-bottom:2px solid #D6D6D6"></div>
<div class="t" style="left:271px;top:861px;color:#444">47:88</div>
<div class="a" style="left:303px;top:858px;width:1px;height:17px;background:#C8C8C8"></div>
<div class="a" style="left:307px;top:858px;width:16px;height:16px;background:#fff;border:1px solid #B8B8B8"></div>
<div class="t" style="left:328px;top:860px;color:#333">Sýna lokuð verk</div>
<div class="a" style="left:492px;top:858px;width:1px;height:17px;background:#C8C8C8"></div>
<div class="a" style="left:1638px;top:858px;width:1px;height:17px;background:#C8C8C8"></div>
<div class="a" style="left:560px;top:67px;width:836px;height:695px;background:#F9F9F9;border:1px solid #1E78C8"></div>
<svg style="left:569px;top:76px" width="18" height="12"><path d="M8.8 1.2A7.4 4.5 0 0 0 5.5 10.3" fill="none" stroke="#1559B0" stroke-width="1.7"/><path d="M10 1.3A7.4 4.5 0 0 1 8.6 10.3" fill="none" stroke="#E01E2A" stroke-width="1.7"/><text x="4.2" y="8.4" font-family="Liberation Sans" font-size="7" font-weight="bold" fill="#222" letter-spacing="-0.3">dk</text></svg>
<div class="t" style="left:591px;top:74px;font-size:11.5px;color:#222;line-height:13px">Verk</div>
<svg style="left:266px;top:75px" width="18" height="12"><path d="M8.8 1.2A7.4 4.5 0 0 0 5.5 10.3" fill="none" stroke="#1559B0" stroke-width="1.7"/><path d="M10 1.3A7.4 4.5 0 0 1 8.6 10.3" fill="none" stroke="#E01E2A" stroke-width="1.7"/><text x="4.2" y="8.4" font-family="Liberation Sans" font-size="7" font-weight="bold" fill="#222" letter-spacing="-0.3">dk</text></svg>
<div class="a" style="left:1272px;top:82px;width:11px;height:1px;background:#333"></div>
<div class="a" style="left:1320px;top:77px;width:11px;height:11px;border:1px solid #333"></div>
<svg style="left:1367px;top:76px" width="12" height="12"><path d="M1 1L11 11M11 1L1 11" stroke="#333" stroke-width="1.2"/></svg>
<div class="a" style="left:568px;top:97px;width:820px;height:30px;background:#9F9EA3"></div>
<div class="a" style="left:568px;top:127px;width:820px;height:2px;background:#fff"></div>
<div class="a" style="left:568px;top:129px;width:820px;height:1px;background:#D8D8D8"></div>
<div class="a" style="left:568px;top:129px;width:1px;height:31px;background:#D8D8D8"></div>
<div class="a" style="left:1387px;top:129px;width:1px;height:31px;background:#D8D8D8"></div>
<svg style="left:1285px;top:105px" width="14" height="15"><path d="M11.5 1.5L6.5 7L11.5 12.5" fill="none" stroke="#1d2631" stroke-width="4.2" stroke-linejoin="round" stroke-linecap="round"/><path d="M11.5 1.5L6.5 7L11.5 12.5" fill="none" stroke="#3B8EDC" stroke-width="2.2" stroke-linecap="round"/><rect x="0" y="0.5" width="3" height="13" fill="#3B8EDC"/></svg>
<svg style="left:1314px;top:105px" width="14" height="15"><path d="M7.5 1.5L2.5 7L7.5 12.5" fill="none" stroke="#1d2631" stroke-width="4.2" stroke-linejoin="round" stroke-linecap="round"/><path d="M7.5 1.5L2.5 7L7.5 12.5" fill="none" stroke="#3B8EDC" stroke-width="2.2" stroke-linecap="round"/></svg>
<svg style="left:1342px;top:105px" width="14" height="15"><path d="M1.5 1.5L6.5 7L1.5 12.5" fill="none" stroke="#1d2631" stroke-width="4.2" stroke-linejoin="round" stroke-linecap="round"/><path d="M1.5 1.5L6.5 7L1.5 12.5" fill="none" stroke="#3B8EDC" stroke-width="2.2" stroke-linecap="round"/></svg>
<svg style="left:1367px;top:105px" width="14" height="15"><path d="M1.5 1.5L6.5 7L1.5 12.5" fill="none" stroke="#1d2631" stroke-width="4.2" stroke-linejoin="round" stroke-linecap="round"/><path d="M1.5 1.5L6.5 7L1.5 12.5" fill="none" stroke="#3B8EDC" stroke-width="2.2" stroke-linecap="round"/><rect x="10" y="0.5" width="3" height="13" fill="#3B8EDC"/></svg>
<div class="a" style="left:568px;top:159px;width:820px;height:550px;background:#F7F7F7;border:1px solid #A8A8A8"></div>
<div class="a" style="left:570px;top:132px;width:53px;height:27px;background:#EEEEEE;border:1px solid #C4C4C4;border-bottom:none"></div>
<div class="a" style="left:705px;top:132px;width:103px;height:27px;background:#EEEEEE;border:1px solid #C4C4C4;border-bottom:none"></div>
<div class="a" style="left:807px;top:132px;width:64px;height:27px;background:#EEEEEE;border:1px solid #C4C4C4;border-bottom:none"></div>
<div class="a" style="left:870px;top:132px;width:113px;height:27px;background:#EEEEEE;border:1px solid #C4C4C4;border-bottom:none"></div>
<div class="a" style="left:982px;top:132px;width:40px;height:27px;background:#EEEEEE;border:1px solid #C4C4C4;border-bottom:none"></div>
<div class="a" style="left:622px;top:130px;width:84px;height:30px;background:#F7F7F7;border:1px solid #A8A8A8;border-bottom:none"></div>
<div class="a" style="left:620px;top:139px;width:82px;height:12px;background:#FFE600"></div>
<div class="t" style="left:570px;width:52px;text-align:center;top:141px;color:#333">Almennt</div>
<div class="t" style="left:622px;width:83px;text-align:center;top:141px;color:#333">Reikningagerð</div>
<div class="t" style="left:705px;width:102px;text-align:center;top:141px;color:#333">Tilboðsupplýsingar</div>
<div class="t" style="left:807px;width:63px;text-align:center;top:141px;color:#333">Aukaflipi 1</div>
<div class="t" style="left:870px;width:112px;text-align:center;top:141px;color:#333">Þjónustuupplýsingar</div>
<div class="t" style="left:982px;width:39px;text-align:center;top:141px;color:#333">Víddir</div>
<div class="a" style="left:577px;top:168px;width:280px;height:359px;background:#F7F7F7;border:1px solid #D0D0D0"></div>
<div class="a" style="left:578px;top:169px;width:278px;height:19px;background:#E6E6E6;border-bottom:1px solid #D0D0D0"></div>
<div class="t" style="left:587px;top:172px;font-weight:bold;font-size:12px;color:#333;line-height:14px">Val</div>
<div class="t" style="left:588px;top:206px;color:#333">Ein lína á reikn.:</div>
<div class="a" style="left:745px;top:204px;width:16px;height:16px;background:#fff;border:1px solid #A8A8A8"></div>
<svg style="left:748px;top:208px" width="10" height="8"><path d="M0.5 4L3.5 7L9.5 0.5" fill="none" stroke="#9A9A9A" stroke-width="1.2"/></svg>
<div class="t" style="left:588px;top:232px;color:#333">Ein vinnulína á reikn.:</div>
<div class="a" style="left:745px;top:230px;width:16px;height:16px;background:#fff;border:1px solid #A8A8A8"></div>
<div class="t" style="left:588px;top:258px;color:#333">Tímar safnast upp eftir:</div>
<div class="a" style="left:746px;top:255px;width:98px;height:19px;background:#fff;border:1px solid #ABABAB"></div>
<div class="t" style="left:749px;top:258px;color:#222">Starfsmönnum</div>
<svg style="left:831px;top:263px" width="7" height="4"><path d="M0 0H7L3.5 4Z" fill="#8A8A8A"/></svg>
<div class="t" style="left:588px;top:285px;color:#333">Akstur safnast upp eftir:</div>
<div class="a" style="left:746px;top:282px;width:98px;height:19px;background:#fff;border:1px solid #ABABAB"></div>
<div class="t" style="left:749px;top:285px;color:#222">Töxtum</div>
<svg style="left:831px;top:290px" width="7" height="4"><path d="M0 0H7L3.5 4Z" fill="#8A8A8A"/></svg>
<div class="t" style="left:588px;top:312px;color:#333">Kostnaður safnast upp eftir:</div>
<div class="a" style="left:746px;top:309px;width:98px;height:19px;background:#fff;border:1px solid #ABABAB"></div>
<div class="t" style="left:749px;top:312px;color:#222">Vörunúmerum</div>
<svg style="left:831px;top:317px" width="7" height="4"><path d="M0 0H7L3.5 4Z" fill="#8A8A8A"/></svg>
<div class="t" style="left:588px;top:339px;color:#333">Dagsetningaröðun:</div>
<div class="a" style="left:745px;top:337px;width:16px;height:16px;background:#fff;border:1px solid #A8A8A8"></div>
<div class="t" style="left:588px;top:365px;color:#333">Uppsöfnun e.magni:</div>
<div class="a" style="left:745px;top:363px;width:16px;height:16px;background:#fff;border:1px solid #A8A8A8"></div>
<div class="t" style="left:588px;top:391px;color:#333">Kostn. á undan vinnu á reikn.:</div>
<div class="a" style="left:745px;top:389px;width:16px;height:16px;background:#fff;border:1px solid #A8A8A8"></div>
<div class="t" style="left:588px;top:417px;color:#333">Flytja á reikn á nýjasta verði:</div>
<div class="a" style="left:745px;top:415px;width:16px;height:16px;background:#fff;border:1px solid #A8A8A8"></div>
<div class="t" style="left:588px;top:443px;color:#333">Sækja færslur frá undirverkum:</div>
<div class="a" style="left:745px;top:441px;width:16px;height:16px;background:#fff;border:1px solid #A8A8A8"></div>
<div class="t" style="left:588px;top:469px;color:#333">Reikn. án vsk:</div>
<div class="a" style="left:745px;top:467px;width:16px;height:16px;background:#fff;border:1px solid #A8A8A8"></div>
<div class="t" style="left:588px;top:495px;color:#333">Endurgr.% véla:</div>
<div class="a" style="left:746px;top:492px;width:98px;height:19px;background:#fff;border:1px solid #ABABAB"></div>
<div class="t" style="left:746px;width:78px;text-align:right;top:495px;color:#222">0,00</div>
<svg style="left:831px;top:500px" width="7" height="4"><path d="M0 0H7L3.5 4Z" fill="#8A8A8A"/></svg>
<div class="a" style="left:863px;top:168px;width:290px;height:180px;background:#F7F7F7;border:1px solid #D0D0D0"></div>
<div class="a" style="left:864px;top:169px;width:288px;height:19px;background:#E6E6E6;border-bottom:1px solid #D0D0D0"></div>
<div class="t" style="left:873px;top:172px;font-weight:bold;font-size:12px;color:#333;line-height:14px">Afsláttur</div>
<div class="a" style="left:867px;top:207px;width:60px;height:12px;background:#FFE600"></div>
<div class="t" style="left:875px;top:206px;color:#333">Afsláttur:</div>
<div class="t" style="left:875px;top:233px;color:#333">Afsláttarprósenta verks:</div>
<div class="t" style="left:875px;top:260px;color:#333">Afsláttur af vinnu:</div>
<div class="t" style="left:875px;top:286px;color:#333">Afsláttur af akstri:</div>
<div class="t" style="left:875px;top:312px;color:#333">Afsláttur af kostnaði:</div>
<div class="a" style="left:998px;top:258px;width:16px;height:16px;background:#fff;border:1px solid #A8A8A8"></div>
<svg style="left:1001px;top:262px" width="10" height="8"><path d="M0.5 4L3.5 7L9.5 0.5" fill="none" stroke="#9A9A9A" stroke-width="1.2"/></svg>
<div class="a" style="left:998px;top:284px;width:16px;height:16px;background:#fff;border:1px solid #A8A8A8"></div>
<div class="a" style="left:998px;top:310px;width:16px;height:16px;background:#fff;border:1px solid #A8A8A8"></div>
<div class="a" style="left:999px;top:203px;width:141px;height:19px;background:#fff;border:1px solid #A8A8A8"></div>
<div class="t" style="left:1001px;top:206px;width:120px;overflow:hidden;color:#222">Afsláttarprósenta verkkaupa</div>
<div class="a" style="left:1122px;top:204px;width:17px;height:17px;background:#D6D6D6;border-left:1px solid #C0C0C0"></div>
<svg style="left:1127px;top:211px" width="7" height="4"><path d="M0 0H7L3.5 4Z" fill="#8A8A8A"/></svg>
<div class="a" style="left:999px;top:224px;width:141px;height:40px;background:#fff;border:1px solid #8F8F8F;box-shadow:2px 2px 2px rgba(0,0,0,0.35)"></div>
<div class="a" style="left:1000px;top:225px;width:139px;height:12px;background:#1C78DC;outline:1px dotted #F08A00"></div>
<div class="t" style="left:1001px;top:224px;color:#fff;font-size:10.7px">Afsláttarprósenta verkkaupa</div>
<div class="t" style="left:1001px;top:237px;color:#222;font-size:10.7px">Afsláttarprósenta verks</div>
<div class="t" style="left:1001px;top:250px;color:#222;font-size:10.7px">Enginn afsláttur</div>
<div class="a" style="left:568px;top:709px;width:821px;height:46px;background:#F7F7F7;border:2px solid #D4D4D4;border-top:none;border-left:1px solid #D4D4D4"></div>
<div class="a" style="left:924px;top:721px;width:78px;height:20px;background:#fff"></div>
<div class="a" style="left:939px;top:729px;width:59px;height:12px;background:#FFE600"></div>
<div class="btn" style="left:579px;top:720px;"><b>F1</b>Hjálp</div>
<div class="btn" style="left:665px;top:720px;"><b>F2</b>Fletta</div>
<div class="btn" style="left:751px;top:720px;"><b>F5</b>Valmynd</div>
<div class="btn" style="left:837px;top:720px;"><b>ESC</b>Hætta</div>
<div class="btn" style="left:923px;top:720px;background:transparent;"><b>F12</b>Skrá</div>
</body></html>
